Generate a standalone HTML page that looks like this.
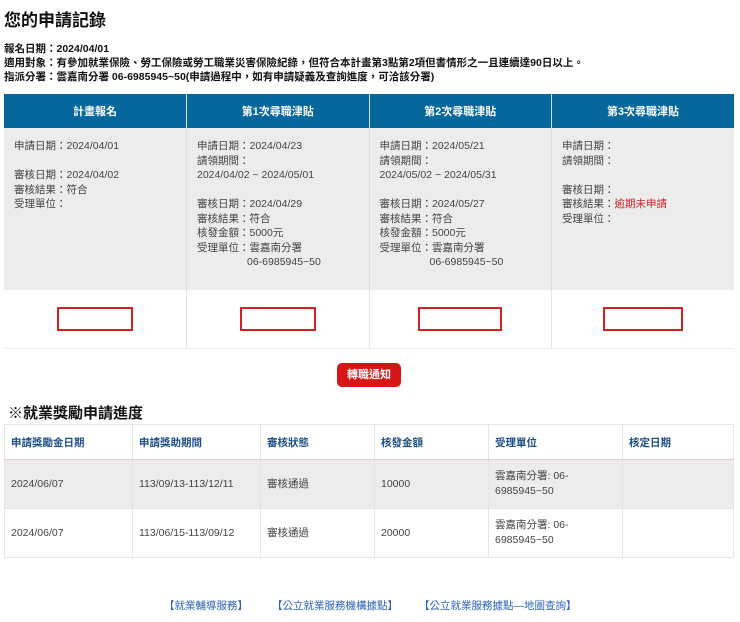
<!DOCTYPE html><html><head><meta charset="utf-8"><style>
body{margin:0;width:740px;height:622px;background:#fff;font-family:"Liberation Sans","Noto Sans CJK TC",sans-serif;color:#222;position:relative;overflow:hidden}
.a{position:absolute}
h1{position:absolute;left:4px;top:6px;margin:0;font-size:17px;font-weight:bold;color:#111}
.info{left:4px;top:42px;font-size:10.5px;font-weight:bold;line-height:14px;color:#111}
table{border-collapse:collapse;position:absolute;left:4px;width:730px;table-layout:fixed}
#t1 th{background:#05679c;color:#fff;font-size:11px;height:34px;padding:0;border-right:1px solid #cfe0ea;font-weight:bold}
#t1 td.g{background:#ececec;height:140px;vertical-align:top;padding:11px 10px;font-size:10.5px;line-height:14.5px;color:#444;border-right:1px solid #ddd}
#t1 td.w{height:58px;padding:0;border-right:1px solid #e4e4e4;border-bottom:1px solid #eee;text-align:center}
.rb{display:inline-block;width:76px;height:24px;border:2px solid #d42020;box-sizing:border-box;margin-top:4px}
.btn{left:337px;top:363px;width:64px;height:24px;background:#d71616;color:#fff;border-radius:5px;font-size:11px;font-weight:bold;text-align:center;line-height:24px}
h2{position:absolute;left:8px;top:402px;margin:0;font-size:15px;font-weight:bold;color:#111}
#t2 td,#t2 th{border:1px solid #e6e6e6;text-align:left;padding:0 6px;font-size:10.5px;color:#444}
#t2 th{height:34px;color:#1c4f86;font-weight:bold;border-bottom:1px solid #f0c8cc}
#t2 tr.g td{background:#ececec}
#t2 td{height:48px;line-height:15px}
.links{top:598px;left:0;width:740px;font-size:10.5px;color:#2a62b8}
.links span{position:absolute}
</style></head><body>
<h1>您的申請記錄</h1>
<div class="a info">報名日期：2024/04/01<br>適用對象：有參加就業保險、勞工保險或勞工職業災害保險紀錄，但符合本計畫第3點第2項但書情形之一且連續達90日以上。<br>指派分署：雲嘉南分署 06-6985945~50(申請過程中，如有申請疑義及查詢進度，可洽該分署)</div>
<table id="t1" style="top:94px"><tr><th>計畫報名</th><th>第1次尋職津貼</th><th>第2次尋職津貼</th><th style="border-right:0">第3次尋職津貼</th></tr>
<tr><td class="g">申請日期：2024/04/01<br><br>審核日期：2024/04/02<br>審核結果：符合<br>受理單位：</td>
<td class="g">申請日期：2024/04/23<br>請領期間：<br>2024/04/02 ~ 2024/05/01<br><br>審核日期：2024/04/29<br>審核結果：符合<br>核發金額：5000元<br>受理單位：雲嘉南分署<br><span style="padding-left:50px">06-6985945~50</span></td>
<td class="g">申請日期：2024/05/21<br>請領期間：<br>2024/05/02 ~ 2024/05/31<br><br>審核日期：2024/05/27<br>審核結果：符合<br>核發金額：5000元<br>受理單位：雲嘉南分署<br><span style="padding-left:50px">06-6985945~50</span></td>
<td class="g" style="border-right:0">申請日期：<br>請領期間：<br><br>審核日期：<br>審核結果：<span style="color:#d42020">逾期未申請</span><br>受理單位：</td></tr>
<tr><td class="w"><span class="rb"></span></td><td class="w"><span class="rb"></span></td><td class="w"><span class="rb" style="width:84px"></span></td><td class="w" style="border-right:0"><span class="rb" style="width:80px"></span></td></tr></table>
<div class="a btn">轉職通知</div>
<h2>※就業獎勵申請進度</h2>
<table id="t2" style="top:424px"><tr><th style="width:115px">申請獎勵金日期</th><th style="width:115px">申請獎助期間</th><th style="width:101px">審核狀態</th><th style="width:101px">核發金額</th><th style="width:121px">受理單位</th><th>核定日期</th></tr>
<tr class="g"><td>2024/06/07</td><td>113/09/13-113/12/11</td><td>審核通過</td><td>10000</td><td>雲嘉南分署: 06-<br>6985945~50</td><td></td></tr>
<tr><td>2024/06/07</td><td>113/06/15-113/09/12</td><td>審核通過</td><td>20000</td><td>雲嘉南分署: 06-<br>6985945~50</td><td></td></tr></table>
<div class="a links"><span style="left:164px">【就業輔導服務】</span><span style="left:272px">【公立就業服務機構據點】</span><span style="left:419px">【公立就業服務據點—地圖查詢】</span></div>
</body></html>
